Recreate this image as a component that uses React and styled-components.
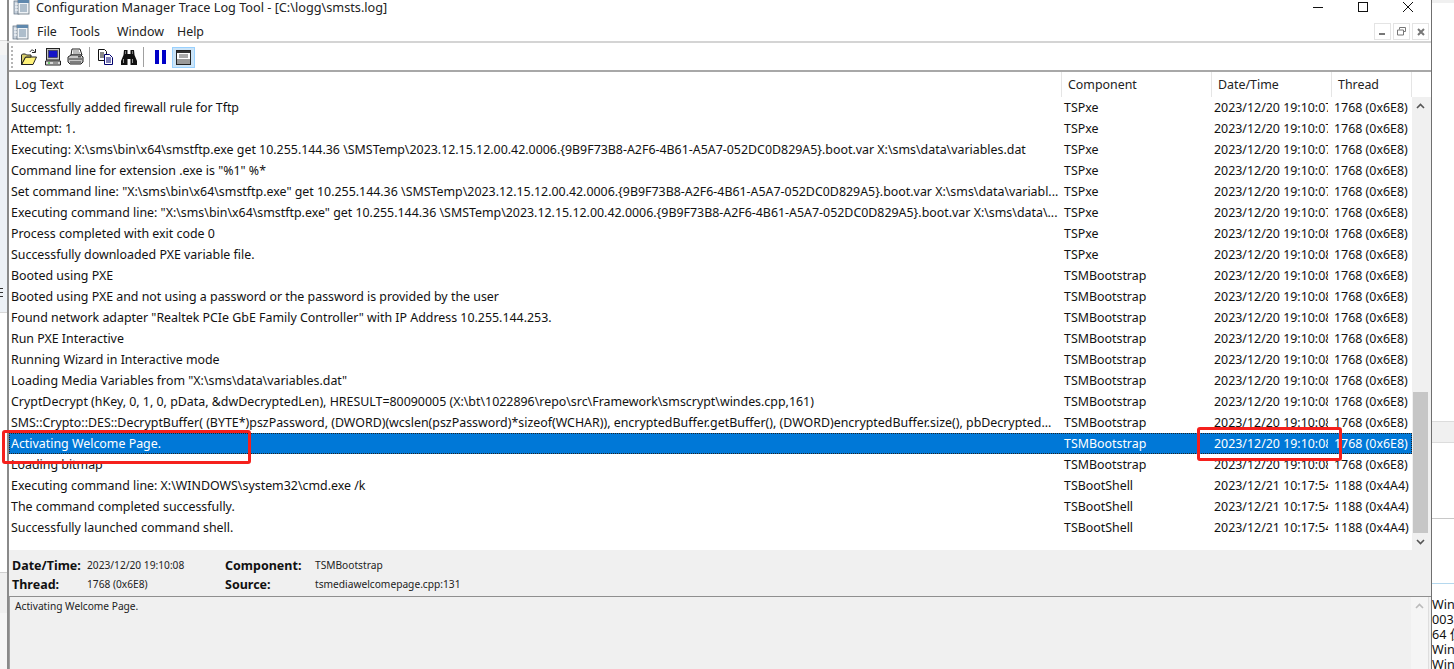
import React from "react"
import styled, { createGlobalStyle } from "styled-components"

const GlobalStyle = createGlobalStyle`
  html, body {
    margin: 0;
    padding: 0;
    width: 1454px;
    height: 669px;
    overflow: hidden;
    background: #fff;
    font-family: "Noto Sans", "Open Sans", sans-serif;
    color: #111;
  }
  * { box-sizing: border-box; }
`

const T7 = "2023/12/20 19:10:07"
const T8 = "2023/12/20 19:10:08"
const T21 = "2023/12/21 10:17:54"
const TH1 = "1768 (0x6E8)"
const TH2 = "1188 (0x4A4)"

const rows = [
  ["Successfully added firewall rule for Tftp", "TSPxe", T7, TH1],
  ["Attempt: 1.", "TSPxe", T7, TH1],
  ["Executing: X:\\sms\\bin\\x64\\smstftp.exe get 10.255.144.36 \\SMSTemp\\2023.12.15.12.00.42.0006.{9B9F73B8-A2F6-4B61-A5A7-052DC0D829A5}.boot.var X:\\sms\\data\\variables.dat", "TSPxe", T7, TH1],
  ['Command line for extension .exe is "%1" %*', "TSPxe", T7, TH1],
  ['Set command line: "X:\\sms\\bin\\x64\\smstftp.exe" get 10.255.144.36 \\SMSTemp\\2023.12.15.12.00.42.0006.{9B9F73B8-A2F6-4B61-A5A7-052DC0D829A5}.boot.var X:\\sms\\data\\variabl...', "TSPxe", T7, TH1],
  ['Executing command line: "X:\\sms\\bin\\x64\\smstftp.exe" get 10.255.144.36 \\SMSTemp\\2023.12.15.12.00.42.0006.{9B9F73B8-A2F6-4B61-A5A7-052DC0D829A5}.boot.var X:\\sms\\data\\...', "TSPxe", T7, TH1],
  ["Process completed with exit code 0", "TSPxe", T8, TH1],
  ["Successfully downloaded PXE variable file.", "TSPxe", T8, TH1],
  ["Booted using PXE", "TSMBootstrap", T8, TH1],
  ["Booted using PXE and not using a password or the password is provided by the user", "TSMBootstrap", T8, TH1],
  ['Found network adapter "Realtek PCIe GbE Family Controller" with IP Address 10.255.144.253.', "TSMBootstrap", T8, TH1],
  ["Run PXE Interactive", "TSMBootstrap", T8, TH1],
  ["Running Wizard in Interactive mode", "TSMBootstrap", T8, TH1],
  ['Loading Media Variables from "X:\\sms\\data\\variables.dat"', "TSMBootstrap", T8, TH1],
  ["CryptDecrypt (hKey, 0, 1, 0, pData, &dwDecryptedLen), HRESULT=80090005 (X:\\bt\\1022896\\repo\\src\\Framework\\smscrypt\\windes.cpp,161)", "TSMBootstrap", T8, TH1],
  ["SMS::Crypto::DES::DecryptBuffer( (BYTE*)pszPassword, (DWORD)(wcslen(pszPassword)*sizeof(WCHAR)), encryptedBuffer.getBuffer(), (DWORD)encryptedBuffer.size(), pbDecrypted...", "TSMBootstrap", T8, TH1],
  ["Activating Welcome Page.", "TSMBootstrap", T8, TH1, true],
  ["Loading bitmap", "TSMBootstrap", T8, TH1],
  ["Executing command line: X:\\WINDOWS\\system32\\cmd.exe /k", "TSBootShell", T21, TH2],
  ["The command completed successfully.", "TSBootShell", T21, TH2],
  ["Successfully launched command shell.", "TSBootShell", T21, TH2],
]

const Page = styled.div`
  position: relative;
  display: flex;
  width: 1454px;
  height: 669px;
  overflow: hidden;
`
const LeftStrip = styled.div`
  width: 7px;
  flex: none;
  background: #f6f6f6;
  display: flex;
  flex-direction: column;
  svg { display: block; flex: none; background: #edf1f6; }
`
const StripBand = styled.div`
  height: ${p => p.h}px;
  flex: none;
  background: ${p => p.bg || "transparent"};
  border-bottom: ${p => (p.line ? `1px solid ${p.line}` : "none")};
`
const Window = styled.div`
  width: 1425px;
  flex: none;
  display: flex;
  flex-direction: column;
  background: #fff;
  border-left: 2px solid #8a8a8a;
  border-right: 1px solid #6f6f6f;
`
const TitleBar = styled.div`
  height: 20px;
  flex: none;
  display: flex;
  align-items: center;
  padding: 0 0 6px 6px;
  font-size: 12.7px;
  margin-left: -2px;
  color: #222;
`
const TitleText = styled.span`
  margin-left: 6px;
  white-space: nowrap;
`
const WindowControls = styled.div`
  margin-left: auto;
  display: flex;
  align-items: center;
  padding-right: 18px;
  gap: 35px;
  svg { display: block; }
`
const MenuRow = styled.div`
  height: 23px;
  flex: none;
  display: flex;
  align-items: center;
  padding: 4px 0 2px 5px;
  border-bottom: 2px solid #d4d4d4;
  margin-left: -2px;
`
const MenuItem = styled.span`
  font-size: 12.4px;
  margin-left: ${p => p.gap}px;
  color: #222;
`
const MdiButtons = styled.div`
  margin-left: auto;
  display: flex;
  gap: 2px;
  padding-right: 2px;
`
const MdiButton = styled.div`
  width: 17px;
  height: 17px;
  border: 1px solid #e4e4e4;
  display: flex;
  align-items: center;
  justify-content: center;
`
const Toolbar = styled.div`
  height: 29px;
  flex: none;
  display: flex;
  align-items: center;
  padding: 1px 0 0 2px;
  border-bottom: 2px solid #a8a8a8;
`
const Grip = styled.div`
  width: 2px;
  height: 22px;
  margin-right: 8px;
  background: repeating-linear-gradient(to bottom, #b5b5b5 0 2px, transparent 2px 4px);
`
const ToolIcon = styled.div`
  width: ${p => p.w || 16}px;
  height: 18px;
  margin-right: ${p => p.gap || 8}px;
  flex: none;
  svg { display: block; }
`
const ToolSep = styled.div`
  width: 1px;
  height: 20px;
  background: #a0a0a0;
  margin-right: ${p => p.right || 8}px;
`
const ToolToggle = styled.div`
  width: 23px;
  height: 21px;
  display: flex;
  align-items: center;
  justify-content: center;
  background: #cce4f7;
  border: 1px solid #99d1ff;
`
const ListArea = styled.div`
  height: 478px;
  flex: none;
  display: flex;
  background: #fff;
`
const ListMain = styled.div`
  width: 1403px;
  flex: none;
  display: flex;
  flex-direction: column;
`
const Columns = "1053px 150px 120px 80px"
const HeaderRow = styled.div`
  height: 25px;
  flex: none;
  display: grid;
  grid-template-columns: ${Columns};
`
const HeaderCell = styled.div`
  font-size: 12.4px;
  padding-left: 6px;
  display: flex;
  align-items: center;
  border-right: 1px solid #e5e5e5;
  color: #222;
`
const Row = styled.div`
  height: 21px;
  flex: none;
  display: grid;
  grid-template-columns: ${Columns};
  align-items: center;
  font-size: 12.4px;
  background: ${p => p.selected ? "#0078d7" : "transparent"};
  color: ${p => p.selected ? "#fff" : "#111"};
  outline: ${p => p.selected ? "1px dotted #222" : "none"};
  outline-offset: -1px;
`
const Cell = styled.div`
  padding-left: 2px;
  overflow: hidden;
  white-space: nowrap;
`
const DateCell = styled(Cell)`
  width: 116px;
`
const ThreadCell = styled(Cell)`
  overflow: visible;
`
const ScrollBar = styled.div`
  flex: 1;
  margin-top: 25px;
  background: #f0f0f0;
  display: flex;
  flex-direction: column;
  padding: 0 3px 0 1px;
`
const ScrollArrow = styled.div`
  height: 17px;
  flex: none;
  display: flex;
  align-items: center;
  justify-content: center;
  svg { display: block; }
`
const ScrollTrack = styled.div`
  flex: 1;
  display: flex;
  flex-direction: column;
`
const ScrollGap = styled.div`
  height: ${p => p.h}px;
  flex: none;
`
const ScrollThumb = styled.div`
  height: 141px;
  flex: none;
  background: #c6c6c6;
`
const Details = styled.div`
  height: 47px;
  flex: none;
  background: #f0f0f0;
  display: grid;
  grid-template-columns: 75px 138px 90px 1fr;
  grid-auto-rows: 19px;
  align-items: center;
  padding: 6px 0 0 3px;
  border-bottom: 1px solid #8f8f8f;
`
const DetailLabel = styled.div`
  font-size: 12.5px;
  font-weight: 700;
  color: #111;
`
const DetailValue = styled.div`
  font-size: 10.2px;
  color: #222;
  margin-top: -2px;
  white-space: nowrap;
`
const MessagePane = styled.div`
  flex: 1;
  display: flex;
  background: #f0f0f0;
`
const MessageText = styled.div`
  flex: 1;
  font-size: 10.2px;
  padding: 2px 0 0 5px;
  color: #222;
  border-left: 1px solid #a0a0a0;
`
const MessageScroll = styled.div`
  width: 18px;
  flex: none;
  margin-right: 2px;
  background: #f5f5f5;
  border-right: 1px solid #dedede;
`
const RightStrip = styled.div`
  flex: 1;
  background: #fff;
  display: flex;
  flex-direction: column;
`
const RightText = styled.div`
  font-family: "Noto Sans", "Noto Sans CJK SC", sans-serif;
  font-size: 12.6px;
  line-height: 15px;
  white-space: nowrap;
  color: #111;
  overflow: hidden;
  margin-top: 13px;
`
const Callout = styled.div`
  position: absolute;
  left: ${p => p.x}px;
  top: ${p => p.y}px;
  width: ${p => p.w}px;
  height: ${p => p.h}px;
  border: 3px solid #f5201c;
  border-radius: 3px;
  pointer-events: none;
`

const AppGlyph = () => (
  <svg width="17" height="16" viewBox="0 0 17 16">
    <rect x="1" y="2" width="5" height="13" fill="#c9d3de" stroke="#5f6f80" strokeWidth=".7" />
    <rect x="5" y="1" width="11" height="14" fill="#eef2f6" stroke="#62707e" strokeWidth=".8" />
    <rect x="5" y="1" width="11" height="3" fill="#5f88ad" />
    <path d="M7 6h7M7 8h7M7 10h7M7 12h7" stroke="#6f8aa2" strokeWidth="1" />
    <path d="M2 5h3M2 8h3M2 11h3" stroke="#fff" strokeWidth="1" />
  </svg>
)
const FolderIcon = () => (
  <svg width="16" height="18" viewBox="0 0 16 18">
    <path d="M.5 7v9.500h11.500l3.500-7.500H4.500L.5 16.500" fill="#fff27a" stroke="#222" strokeWidth="1" />
    <path d="M.5 7l1-1h3l1 1h4.500v2H4.500L.5 16.500z" fill="#d8cf6e" stroke="#222" strokeWidth="1" />
    <path d="M9 4c1-2.500 3-2.500 4.500-.5M14.500 1v3.500H11" fill="none" stroke="#222" strokeWidth="1" />
  </svg>
)
const ComputerIcon = () => (
  <svg width="16" height="18" viewBox="0 0 16 18">
    <rect x="1.500" y=".5" width="13" height="11.500" fill="#c4c4c4" stroke="#222" />
    <rect x="3.500" y="2.500" width="9" height="7" fill="#1414c8" stroke="#333" strokeWidth=".6" />
    <path d="M.5 13h15v4H.5z" fill="#d8d8d8" stroke="#222" />
    <rect x="3" y="14.500" width="2" height="1" fill="#0a0" />
    <path d="M8 15h5" stroke="#555" />
  </svg>
)
const PrinterIcon = () => (
  <svg width="17" height="18" viewBox="0 0 17 18">
    <path d="M5 1h8l2 6H4z" fill="#fff" stroke="#222" />
    <path d="M6 3h6M6 5h7" stroke="#777" />
    <path d="M1 9l3-2h10l2 2v5l-2 2H3l-2-2z" fill="#c8c8c8" stroke="#222" />
    <path d="M2 11h13M3 14h11" stroke="#333" />
    <rect x="11" y="8" width="3" height="1.500" fill="#555" />
  </svg>
)
const CopyIcon = () => (
  <svg width="16" height="18" viewBox="0 0 16 18">
    <path d="M.5 1.500h6l2 2v9h-8z" fill="#fff" stroke="#111" />
    <path d="M2 5h4M2 7h4M2 9h4" stroke="#111" />
    <path d="M6.500 6.500h5l3 3v7h-8z" fill="#fff" stroke="#00006e" />
    <path d="M8 10h5M8 12h5M8 14h5" stroke="#00006e" />
  </svg>
)
const BinocularsIcon = () => (
  <svg width="16" height="18" viewBox="0 0 16 18">
    <path d="M3 2h3.500v4h3V2H13l.5 5 2.500 6v4h-6.500v-6h-3v6H0v-4l2.500-6z" fill="#111" />
    <path d="M2.500 11v4M11.500 11v4" stroke="#999" />
    <path d="M4.500 3v3M11.500 3v3" stroke="#777" />
  </svg>
)
const PauseIcon = () => (
  <svg width="11" height="18" viewBox="0 0 11 18">
    <rect x="0" y="2" width="4" height="14" fill="#0000c8" />
    <rect x="7" y="2" width="4" height="14" fill="#0000c8" />
  </svg>
)
const PanelIcon = () => (
  <svg width="15" height="15" viewBox="0 0 15 15">
    <rect x=".5" y=".5" width="14" height="14" fill="#fff" stroke="#222" />
    <rect x="1" y="1" width="13" height="2" fill="#333" />
    <path d="M3 5h9M3 7h9" stroke="#555" />
    <rect x="1" y="9" width="13" height="5" fill="#9a9a9a" />
  </svg>
)
const Chevron = ({ down, color = "#555" }) => (
  <svg width="9" height="6" viewBox="0 0 9 6">
    <path d={down ? "M1 1l3.500 3.500L8 1" : "M1 5l3.500-3.500L8 5"} fill="none" stroke={color} strokeWidth="1.600" />
  </svg>
)

const App = () => {
  return (
    <Page>
      <GlobalStyle />
      <LeftStrip>
        <StripBand h={41} bg="#fff" line="#dcdcdc" />
        <StripBand h={14} bg="#f5f5f5" />
        <StripBand h={232} bg="#edf1f6" />
        <svg width="7" height="13" viewBox="0 0 7 13">
          <path d="M0 1.500h3M0 5.500h3M0 9.500h3" stroke="#333" />
        </svg>
        <StripBand h={13} bg="#edf1f6" line="#d8d8d8" />
        <StripBand h={260} bg="#fff" line="#cfcfcf" />
        <StripBand h={40} bg="#f0f0f0" />
      </LeftStrip>
      <Window>
        <TitleBar>
          <AppGlyph />
          <TitleText>Configuration Manager Trace Log Tool - [C:\logg\smsts.log]</TitleText>
          <WindowControls>
            <svg width="10" height="10" viewBox="0 0 10 10"><path d="M0 5.500h10" stroke="#111" /></svg>
            <svg width="10" height="10" viewBox="0 0 10 10"><rect x=".5" y=".5" width="9" height="9" fill="none" stroke="#111" /></svg>
            <svg width="10" height="10" viewBox="0 0 10 10"><path d="M0 0l10 10M10 0L0 10" stroke="#111" /></svg>
          </WindowControls>
        </TitleBar>
        <MenuRow>
          <AppGlyph />
          <MenuItem gap={8}>File</MenuItem>
          <MenuItem gap={13}>Tools</MenuItem>
          <MenuItem gap={17}>Window</MenuItem>
          <MenuItem gap={13}>Help</MenuItem>
          <MdiButtons>
            <MdiButton>
              <svg width="7" height="7" viewBox="0 0 7 7"><path d="M0 6h6" stroke="#777" strokeWidth="2" /></svg>
            </MdiButton>
            <MdiButton>
              <svg width="9" height="9" viewBox="0 0 9 9"><path d="M2.500 2.500V.5h6v4h-2M.5 3h6v5h-6z" fill="none" stroke="#777" /></svg>
            </MdiButton>
            <MdiButton>
              <svg width="8" height="8" viewBox="0 0 8 8"><path d="M1 1l6 6M7 1L1 7" stroke="#777" strokeWidth="2" /></svg>
            </MdiButton>
          </MdiButtons>
        </MenuRow>
        <Toolbar>
          <Grip />
          <ToolIcon><FolderIcon /></ToolIcon>
          <ToolIcon gap={6}><ComputerIcon /></ToolIcon>
          <ToolIcon w={17} gap={5}><PrinterIcon /></ToolIcon>
          <ToolSep />
          <ToolIcon gap={7}><CopyIcon /></ToolIcon>
          <ToolIcon gap={6}><BinocularsIcon /></ToolIcon>
          <ToolSep right={11} />
          <ToolIcon w={11} gap={6}><PauseIcon /></ToolIcon>
          <ToolToggle><PanelIcon /></ToolToggle>
        </Toolbar>
        <ListArea>
          <ListMain>
            <HeaderRow>
              <HeaderCell>Log Text</HeaderCell>
              <HeaderCell>Component</HeaderCell>
              <HeaderCell>Date/Time</HeaderCell>
              <HeaderCell>Thread</HeaderCell>
            </HeaderRow>
            {rows.map(([text, comp, time, thread, selected]) => (
              <Row key={text} selected={selected}>
                <Cell>{text}</Cell>
                <Cell>{comp}</Cell>
                <DateCell>{time}</DateCell>
                <ThreadCell>{thread}</ThreadCell>
              </Row>
            ))}
          </ListMain>
          <ScrollBar>
            <ScrollArrow><Chevron /></ScrollArrow>
            <ScrollTrack>
              <ScrollGap h={278} />
              <ScrollThumb />
            </ScrollTrack>
            <ScrollArrow><Chevron down /></ScrollArrow>
          </ScrollBar>
        </ListArea>
        <Details>
          <DetailLabel>Date/Time:</DetailLabel>
          <DetailValue>2023/12/20 19:10:08</DetailValue>
          <DetailLabel>Component:</DetailLabel>
          <DetailValue>TSMBootstrap</DetailValue>
          <DetailLabel>Thread:</DetailLabel>
          <DetailValue>1768 (0x6E8)</DetailValue>
          <DetailLabel>Source:</DetailLabel>
          <DetailValue>tsmediawelcomepage.cpp:131</DetailValue>
        </Details>
        <MessagePane>
          <MessageText>Activating Welcome Page.</MessageText>
          <MessageScroll>
            <ScrollArrow><Chevron color="#bbb" /></ScrollArrow>
          </MessageScroll>
        </MessagePane>
      </Window>
      <RightStrip>
        <StripBand h={3} bg="#f0f0f0" />
        <StripBand h={419} bg="#fff" line="#dcdcdc" />
        <StripBand h={21} bg="#f0f0f0" line="#dcdcdc" />
        <StripBand h={76} bg="#fff" line="#c8c8c8" />
        <StripBand h={65} bg="#fff" line="#b5d8ee" />
        <RightText>
          Win<br />003<br />64 位<br />Wind<br />Win
        </RightText>
      </RightStrip>
      <Callout x={2} y={430} w={249} h={34} />
      <Callout x={1197} y={427} w={145} h={34} />
    </Page>
  )
}

export default App
